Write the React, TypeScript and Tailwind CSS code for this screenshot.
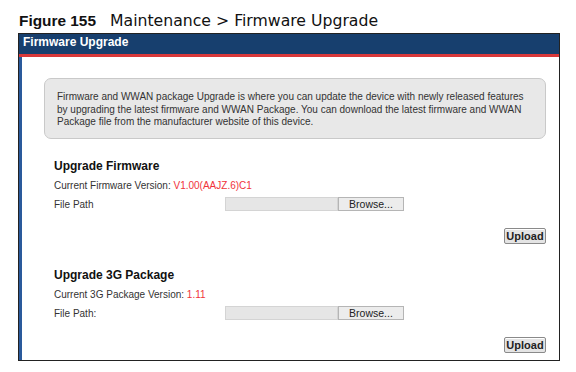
import React from 'react';

const FileRow: React.FC<{ label: string }> = ({ label }) => (
    <div className="flex items-center h-[22px]">
        <div className="w-[171px]">{label}</div>
        <div className="flex h-[14px]">
            <div className="w-[113px] bg-[#e6e6e6] border border-[#d4d4d4]"></div>
            <button className="w-[66px] bg-[#ececec] border border-[#b5b5b5] text-[10.5px] leading-none text-[#222] flex items-center justify-center" type="button">
                Browse...
            </button>
        </div>
    </div>
);

const UploadButton: React.FC = () => (
    <div className="flex justify-end pr-[3px]">
        <button className="w-[42px] h-[16px] bg-[#e4e4e4] border border-[#8a8a8a] rounded-[2px] text-[11px] font-bold leading-none text-[#222] shadow-[inset_0_1px_0_#fff]" type="button">
            Upload
        </button>
    </div>
);

const App: React.FC = () => {
    return (
        <div className="w-[576px] h-[372px] bg-white font-['Liberation_Sans',Arial,sans-serif] text-[10px] text-[#333] overflow-hidden">
            {/* figure caption */}
            <div className="pt-[13px] pl-[19px] h-[33px] text-[#111] flex items-baseline leading-none">
                <span className="font-bold text-[15.4px]">Figure 155</span>
                <span className="ml-[14px] text-[15.7px] font-['DejaVu_Sans',Verdana,sans-serif]">Maintenance &gt; Firmware Upgrade</span>
            </div>

            {/* panel */}
            <div className="ml-[18px] w-[542px] h-[328px] border border-[#222] flex flex-col">
                <div className="h-[20px] bg-[#173f6e] text-white font-bold text-[12px] pl-[4px] pt-[1px] leading-[14px]">
                    Firmware Upgrade
                </div>
                <div className="h-[3px] bg-[#d8383a]"></div>
                <div className="flex-1 border-l-[3px] border-[#2a5a9c] pl-[22px] pr-[10px]">
                    {/* info box */}
                    <div className="mt-[21px] w-[502px] h-[61px] bg-[#e8e8e8] border border-[#c9c9c9] rounded-[7px] pl-[12px] pt-[12px] leading-[12.5px] text-[#333]">
                        Firmware and WWAN package Upgrade is where you can update the device with newly released features<br />
                        by upgrading the latest firmware and WWAN Package. You can download the latest firmware and WWAN<br />
                        Package file from the manufacturer website of this device.
                    </div>

                    {/* firmware */}
                    <div className="pl-[10px] mt-[19px]">
                        <div className="font-bold text-[12px] text-[#111] h-[16px] leading-[16px]">Upgrade Firmware</div>
                        <div className="mt-[5px] h-[14px] leading-[14px]">
                            Current Firmware Version: <span className="text-[#f0333a]">V1.00(AAJZ.6)C1</span>
                        </div>
                        <FileRow label="File Path" />
                    </div>
                    <div className="mt-[13px]">
                        <UploadButton />
                    </div>

                    {/* 3G package */}
                    <div className="pl-[10px] mt-[23px]">
                        <div className="font-bold text-[12px] text-[#111] h-[16px] leading-[16px]">Upgrade 3G Package</div>
                        <div className="mt-[5px] h-[14px] leading-[14px]">
                            Current 3G Package Version: <span className="text-[#f0333a]">1.11</span>
                        </div>
                        <FileRow label="File Path:" />
                    </div>
                    <div className="mt-[13px]">
                        <UploadButton />
                    </div>
                </div>
            </div>
        </div>
    );
};

export default App;
